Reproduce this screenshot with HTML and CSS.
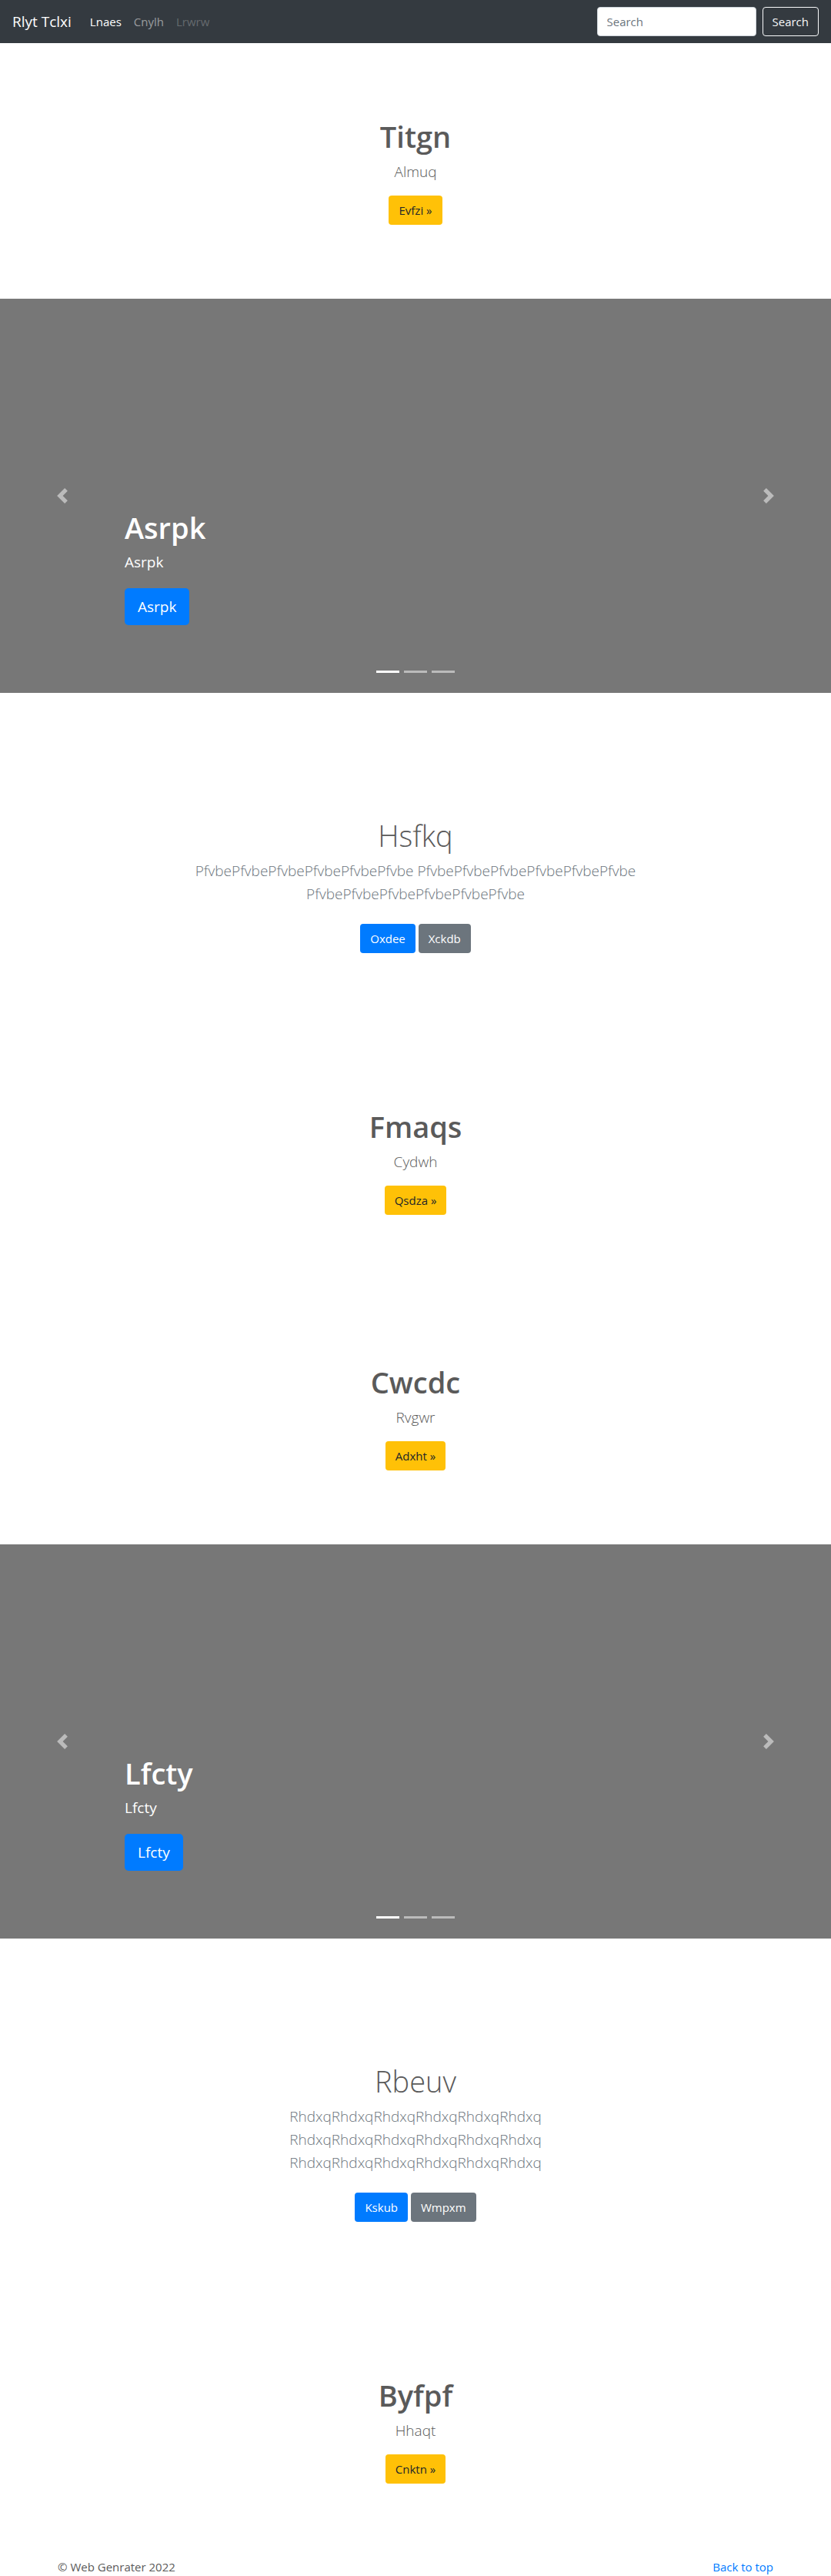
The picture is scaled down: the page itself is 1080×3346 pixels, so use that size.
FILE: index.html
```html
<!DOCTYPE html>
<html lang="en">
<head>
<meta charset="utf-8">
<meta name="viewport" content="width=device-width, initial-scale=1">
<title>Rlyt Tclxi</title>
<link rel="stylesheet" href="styles.css">
</head>
<body>
<header class="navbar" id="top">
  <a class="brand" href="#">Rlyt Tclxi</a>
  <nav class="nav">
    <a class="nav-link active" href="#">Lnaes</a>
    <a class="nav-link" href="#">Cnylh</a>
    <a class="nav-link disabled" href="#">Lrwrw</a>
  </nav>
  <form class="search">
    <input class="search-input" type="search" placeholder="Search" aria-label="Search">
    <button class="btn btn-outline" type="submit">Search</button>
  </form>
</header>
<main>
  <section class="feature">
    <h1 class="title">Titgn</h1>
    <p class="lead">Almuq</p>
    <a class="btn btn-warning" href="#">Evfzi »</a>
  </section>

  <section class="carousel">
    <div class="caption">
      <h1 class="title">Asrpk</h1>
      <p class="caption-text">Asrpk</p>
      <a class="btn btn-large btn-primary" href="#">Asrpk</a>
    </div>
    <button class="control prev" type="button" aria-label="Previous"><svg class="arrow" viewBox="0 0 8 8"><path d="M5.25 0l-4 4 4 4 1.5-1.5-2.5-2.5 2.5-2.5-1.5-1.5z"/></svg></button>
    <button class="control next" type="button" aria-label="Next"><svg class="arrow" viewBox="0 0 8 8"><path d="M2.75 0l-1.5 1.5 2.5 2.5-2.5 2.5 1.5 1.5 4-4-4-4z"/></svg></button>
    <div class="indicators"><span class="dot current"></span><span class="dot"></span><span class="dot"></span></div>
  </section>

  <section class="intro">
    <h1 class="title light">Hsfkq</h1>
    <p class="lead muted">PfvbePfvbePfvbePfvbePfvbePfvbe PfvbePfvbePfvbePfvbePfvbePfvbe PfvbePfvbePfvbePfvbePfvbePfvbe</p>
    <div class="actions">
      <a class="btn btn-primary" href="#">Oxdee</a>
      <a class="btn btn-secondary" href="#">Xckdb</a>
    </div>
  </section>

  <section class="feature">
    <h1 class="title">Fmaqs</h1>
    <p class="lead">Cydwh</p>
    <a class="btn btn-warning" href="#">Qsdza »</a>
  </section>

  <section class="feature">
    <h1 class="title">Cwcdc</h1>
    <p class="lead">Rvgwr</p>
    <a class="btn btn-warning" href="#">Adxht »</a>
  </section>

  <section class="carousel">
    <div class="caption">
      <h1 class="title">Lfcty</h1>
      <p class="caption-text">Lfcty</p>
      <a class="btn btn-large btn-primary" href="#">Lfcty</a>
    </div>
    <button class="control prev" type="button" aria-label="Previous"><svg class="arrow" viewBox="0 0 8 8"><path d="M5.25 0l-4 4 4 4 1.5-1.5-2.5-2.5 2.5-2.5-1.5-1.5z"/></svg></button>
    <button class="control next" type="button" aria-label="Next"><svg class="arrow" viewBox="0 0 8 8"><path d="M2.75 0l-1.5 1.5 2.5 2.5-2.5 2.5 1.5 1.5 4-4-4-4z"/></svg></button>
    <div class="indicators"><span class="dot current"></span><span class="dot"></span><span class="dot"></span></div>
  </section>

  <section class="intro">
    <h1 class="title light">Rbeuv</h1>
    <p class="lead muted">RhdxqRhdxqRhdxqRhdxqRhdxqRhdxq RhdxqRhdxqRhdxqRhdxqRhdxqRhdxq RhdxqRhdxqRhdxqRhdxqRhdxqRhdxq</p>
    <div class="actions">
      <a class="btn btn-primary" href="#">Kskub</a>
      <a class="btn btn-secondary" href="#">Wmpxm</a>
    </div>
  </section>

  <section class="feature">
    <h1 class="title">Byfpf</h1>
    <p class="lead">Hhaqt</p>
    <a class="btn btn-warning" href="#">Cnktn »</a>
  </section>
</main>
<footer class="footer">
  <span>© Web Genrater 2022</span>
  <a class="link" href="#top">Back to top</a>
</footer>
</body>
</html>
```
FILE: styles.css
```css
* { box-sizing: border-box; }

body {
  margin: 0;
  background: #fff;
  color: #5a5a5a;
  font: 15px/24px "Segoe UI", "Open Sans", sans-serif;
}

h1, p { margin: 0; }
a { text-decoration: none; }

/* Navigation bar */
.navbar {
  display: flex;
  align-items: center;
  min-height: 56px;
  padding: 8px 16px;
  background: #343a40;
}
.brand {
  margin-right: 16px;
  color: #fff;
  font-size: 19px;
  line-height: 30px;
}
.nav { display: flex; flex: 1; }
.nav-link { padding: 8px; color: rgba(255, 255, 255, .5); }
.nav-link.active { color: #fff; }
.nav-link.disabled { color: rgba(255, 255, 255, .25); }
.search { display: flex; gap: 8px; }
.search-input {
  width: 207px;
  height: 38px;
  padding: 6px 12px;
  border: 1px solid #ced4da;
  border-radius: 4px;
  background: #fff;
  color: #495057;
  font: inherit;
}
.search-input::placeholder { color: #6c757d; opacity: 1; }

/* Buttons */
.btn {
  display: inline-block;
  padding: 6px 12px;
  border: 1px solid transparent;
  border-radius: 4px;
  background: transparent;
  font: inherit;
  vertical-align: middle;
}
.btn-outline { border-color: #f8f9fa; color: #f8f9fa; }
.btn-primary { background: #007bff; color: #fff; }
.btn-secondary { background: #6c757d; color: #fff; }
.btn-warning { background: #ffc107; color: #212529; }
.btn-large {
  padding: 8px 16px;
  border-radius: 5px;
  font-size: 19px;
  line-height: 30px;
}

/* Centred text sections */
.feature, .intro {
  display: flex;
  flex-direction: column;
  align-items: center;
  padding: 96px 15px;
  text-align: center;
}
.title {
  margin-bottom: 8px;
  padding-top: 2px;
  font-size: 38px;
  font-weight: 600;
  line-height: 46px;
}
.title.light { font-weight: 300; }
.lead {
  max-width: 610px;
  margin-bottom: 16px;
  font-size: 19px;
  font-weight: 300;
  line-height: 30px;
}
.muted { color: #6c757d; }
.actions { margin: 8px 0; }

/* Carousel */
.carousel {
  position: relative;
  display: flex;
  align-items: flex-end;
  min-height: 512px;
  margin-bottom: 64px;
  padding: 0 15% 88px;
  background: #777;
  color: #fff;
}
.caption-text {
  margin-bottom: 20px;
  font-size: 19px;
  line-height: 28px;
}
.control {
  position: absolute;
  top: 0;
  bottom: 0;
  display: flex;
  align-items: center;
  justify-content: center;
  width: 15%;
  padding: 0;
  border: 0;
  background: none;
  opacity: .5;
}
.prev { left: 0; }
.next { right: 0; }
.arrow { width: 20px; height: 20px; fill: #fff; }
.indicators {
  position: absolute;
  right: 15%;
  bottom: 26px;
  left: 15%;
  display: flex;
  justify-content: center;
  gap: 6px;
}
.dot { width: 30px; height: 3px; background: #fff; opacity: .5; }
.dot.current { opacity: 1; }

/* Footer */
.footer {
  display: flex;
  justify-content: space-between;
  max-width: 960px;
  margin: 0 auto;
  padding: 0 15px;
}
.link { color: #007bff; }
```
